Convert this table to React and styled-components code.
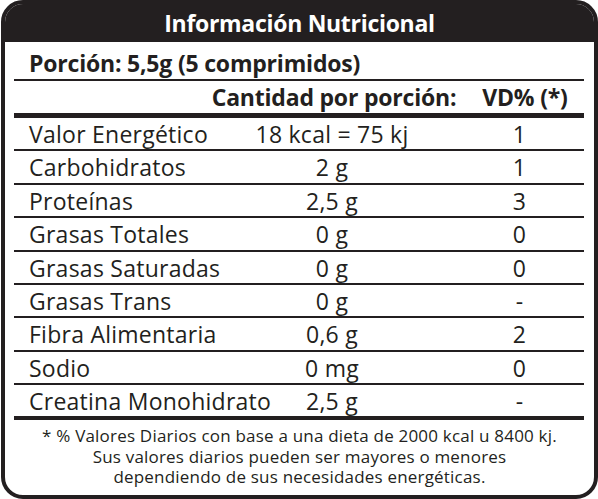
import styled, { createGlobalStyle } from "styled-components";

const Global = createGlobalStyle`
  html, body {
    margin: 0;
    padding: 0;
    background: #ffffff;
  }
  body {
    font-family: "Open Sans", "Noto Sans", "Liberation Sans", sans-serif;
    color: #231f20;
  }
`;

const Label = styled.div`
  box-sizing: border-box;
  width: 597px;
  margin: 0 0 0 1px;
  border: 4px solid #231f20;
  border-radius: 22px;
  overflow: hidden;
  background: #ffffff;
`;

const Title = styled.h1`
  margin: 0;
  height: 38px;
  background: #231f20;
  color: #ffffff;
  font-size: 23px;
  font-weight: 700;
  line-height: 38px;
  text-align: center;
  letter-spacing: -0.3px;
`;

const Body = styled.div`
  padding: 0 10px 0 9px;
`;

const Serving = styled.div`
  height: 39px;
  padding: 3px 0 0 15px;
  box-sizing: border-box;
  border-bottom: 2px solid #231f20;
  font-size: 23px;
  font-weight: 700;
  line-height: 36px;
  letter-spacing: -0.2px;
`;

const Row = styled.div`
  display: grid;
  grid-template-columns: 226px 184px 1fr;
  align-items: center;
  height: ${(p) => p.$height || 33}px;
  padding-bottom: ${(p) => (p.$head ? 0 : 1)}px;
  box-sizing: border-box;
  border-bottom: ${(p) => p.$line || 2}px solid #231f20;
  font-size: 23px;
  font-weight: ${(p) => (p.$head ? 700 : 400)};
  letter-spacing: ${(p) => (p.$head ? -0.2 : 0.25)}px;
`;

const Name = styled.div`
  padding-left: 15px;
  white-space: nowrap;
`;

const Cell = styled.div`
  display: flex;
  justify-content: center;
  white-space: nowrap;
  padding-left: ${(p) => p.$shift || 0}px;
`;

const Note = styled.div`
  padding: 6px 0 7px;
  text-align: center;
`;

const NoteLine = styled.div`
  height: 20.5px;
  font-size: 17px;
  line-height: 20.5px;
  letter-spacing: 0.2px;
  white-space: nowrap;
`;

const rows = [
  ["Valor Energético", "18 kcal = 75 kj", "1"],
  ["Carbohidratos", "2 g", "1"],
  ["Proteínas", "2,5 g", "3"],
  ["Grasas Totales", "0 g", "0"],
  ["Grasas Saturadas", "0 g", "0"],
  ["Grasas Trans", "0 g", "-"],
  ["Fibra Alimentaria", "0,6 g", "2"],
  ["Sodio", "0 mg", "0"],
  ["Creatina Monohidrato", "2,5 g", "-"],
];

const notes = [
  "* % Valores Diarios con base a una dieta de 2000 kcal u 8400 kj.",
  "Sus valores diarios pueden ser mayores o menores",
  "dependiendo de sus necesidades energéticas.",
];

export default function App() {
  return (
    <>
      <Global />
      <Label>
        <Title>Información Nutricional</Title>
        <Body>
          <Serving>Porción: 5,5g (5 comprimidos)</Serving>
          <Row $head $height={37} $line={5}>
            <Name />
            <Cell $shift={4}>Cantidad por porción:</Cell>
            <Cell $shift={42}>VD% (*)</Cell>
          </Row>
          {rows.map(([name, amount, vd], i) => {
            const last = i === rows.length - 1;
            return (
              <Row key={name} $height={last ? 35 : 33.4} $line={last ? 4 : 2}>
                <Name>{name}</Name>
                <Cell>{amount}</Cell>
                <Cell $shift={31}>{vd}</Cell>
              </Row>
            );
          })}
        </Body>
        <Note>
          {notes.map((line) => (
            <NoteLine key={line}>{line}</NoteLine>
          ))}
        </Note>
      </Label>
    </>
  );
}
